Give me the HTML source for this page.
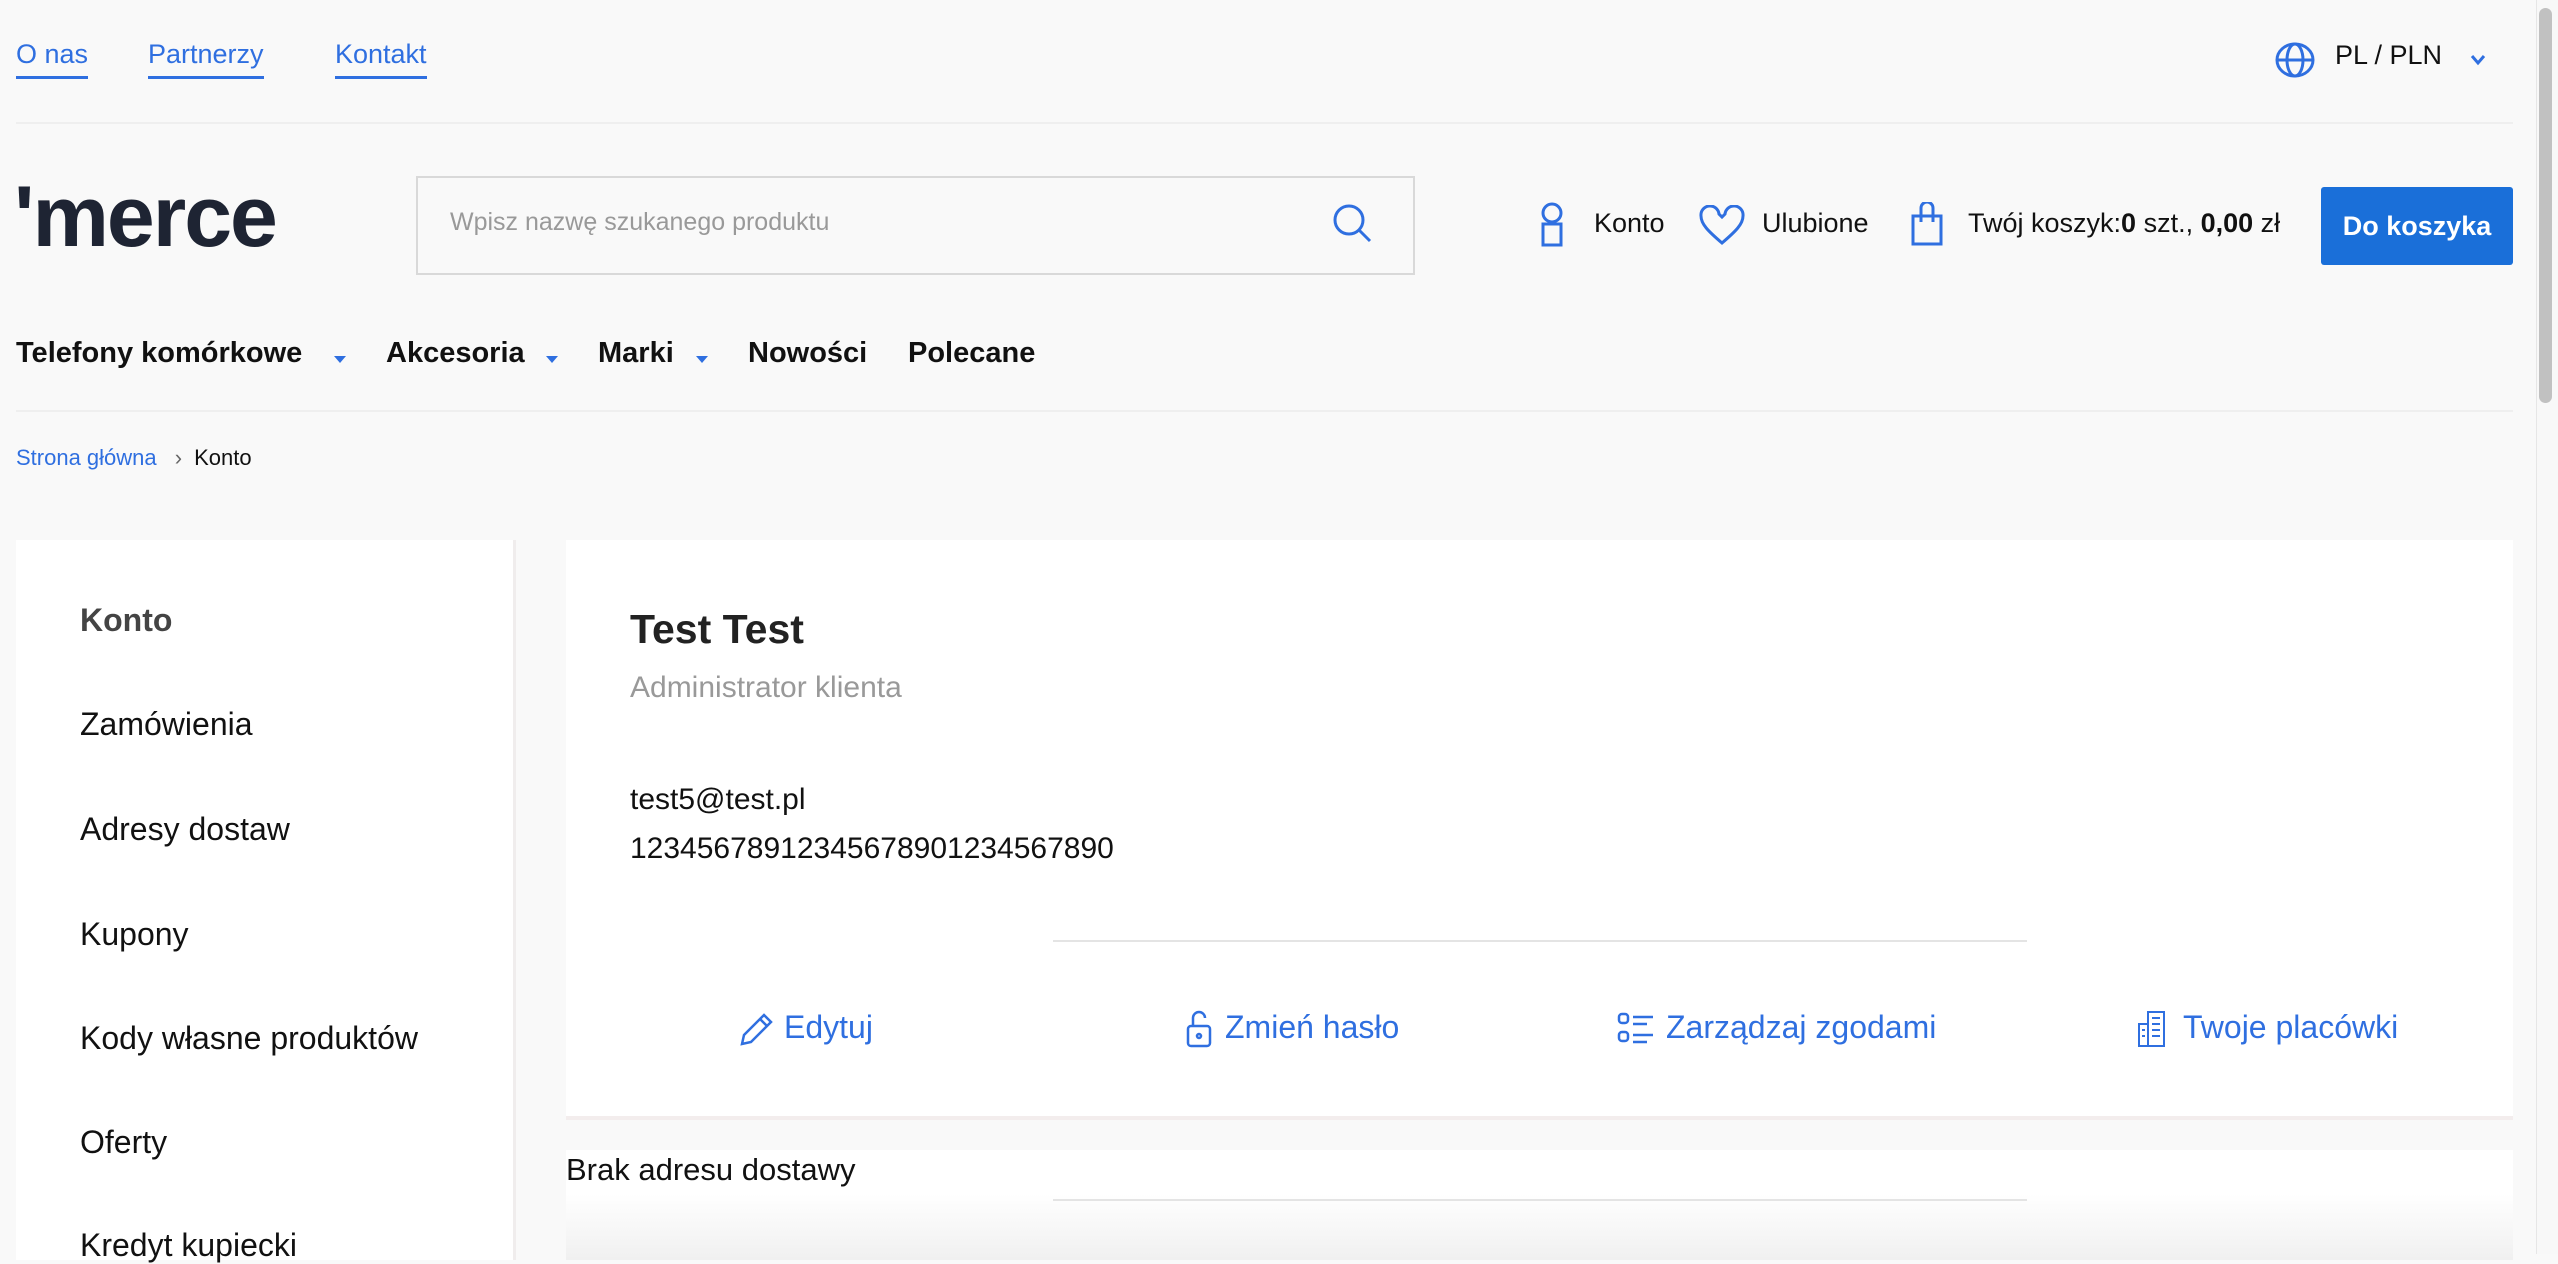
<!DOCTYPE html>
<html><head><meta charset="utf-8"><style>
*{margin:0;padding:0;box-sizing:border-box}
body{width:2558px;height:1254px;overflow:hidden;background:#f9f9f9;font-family:"Liberation Sans",sans-serif;color:#111;position:relative}
.a{position:absolute;white-space:nowrap}
.tl{color:#2f6fe0;font-size:27px;top:39px;border-bottom:3px solid #2f6fe0;padding-bottom:6px}
.nav{font-size:29px;font-weight:bold;top:337px}
.caret{position:absolute;width:0;height:0;border-left:6px solid transparent;border-right:6px solid transparent;border-top:7px solid #2f6fe0}
.side{font-size:32px;color:#111}
.act{font-size:32px;color:#2f6fe0;top:1009px}
svg{position:absolute}
</style></head><body>
<div class="a tl" style="left:16px">O nas</div>
<div class="a tl" style="left:148px">Partnerzy</div>
<div class="a tl" style="left:335px">Kontakt</div>
<svg style="left:2275px;top:42px" width="40" height="36" viewBox="0 0 40 36" fill="none" stroke="#2f6fe0" stroke-width="3"><ellipse cx="20" cy="18" rx="18" ry="16"/><ellipse cx="20" cy="18" rx="8" ry="16"/><line x1="2" y1="18" x2="38" y2="18"/></svg>
<div class="a" style="left:2335px;top:40px;font-size:27px">PL / PLN</div>
<svg style="left:2470px;top:54px" width="16" height="12" viewBox="0 0 16 12"><path d="M2 2l6 7 6-7" stroke="#2f6fe0" stroke-width="3" fill="none"/></svg>
<div class="a" style="left:16px;top:122px;width:2497px;height:2px;background:#efefef"></div>
<div class="a" style="left:14px;top:168px;font-size:86px;font-weight:bold;color:#1e2433;letter-spacing:-2px">'merce</div>
<div class="a" style="left:416px;top:176px;width:999px;height:99px;border:2px solid #d9d9d9;background:#f9f9f9"></div>
<div class="a" style="left:450px;top:208px;font-size:25px;color:#999">Wpisz nazwę szukanego produktu</div>
<svg style="left:1332px;top:203px" width="42" height="40" viewBox="0 0 42 40" fill="none" stroke="#2f6fe0" stroke-width="3"><circle cx="17" cy="17" r="14"/><line x1="27" y1="27" x2="38" y2="38"/></svg>
<svg style="left:1538px;top:202px" width="28" height="45" viewBox="0 0 28 45" fill="none" stroke="#2f6fe0" stroke-width="3"><circle cx="14" cy="11" r="9"/><rect x="5" y="22" width="18" height="21"/></svg>
<div class="a" style="left:1594px;top:208px;font-size:27px">Konto</div>
<svg style="left:1698px;top:205px" width="48" height="40" viewBox="0 0 48 40" fill="none" stroke="#2f6fe0" stroke-width="3"><path d="M24 38C10 26 3 19 3 11a9 9 0 0 1 18-2l3 3 3-3a9 9 0 0 1 18 2c0 8-7 15-21 27z"/></svg>
<div class="a" style="left:1762px;top:208px;font-size:27px">Ulubione</div>
<svg style="left:1910px;top:202px" width="34" height="44" viewBox="0 0 34 44" fill="none" stroke="#2f6fe0" stroke-width="3"><rect x="3" y="14" width="28" height="28"/><path d="M11 20V6a6 6 0 0 1 12 0v14"/></svg>
<div class="a" style="left:1968px;top:208px;font-size:27px">Twój koszyk:<b>0</b> szt., <b>0,00</b> zł</div>
<div class="a" style="left:2321px;top:187px;width:192px;height:78px;background:#1a6fd9;border-radius:3px;color:#fff;font-weight:bold;font-size:27px;text-align:center;line-height:78px">Do koszyka</div>
<div class="a nav" style="left:16px">Telefony komórkowe</div><div class="caret" style="left:334px;top:356px"></div>
<div class="a nav" style="left:386px">Akcesoria</div><div class="caret" style="left:546px;top:356px"></div>
<div class="a nav" style="left:598px">Marki</div><div class="caret" style="left:696px;top:356px"></div>
<div class="a nav" style="left:748px">Nowości</div>
<div class="a nav" style="left:908px">Polecane</div>
<div class="a" style="left:16px;top:410px;width:2497px;height:2px;background:#efefef"></div>
<div class="a" style="left:16px;top:445px;font-size:22px;color:#2f6fe0">Strona główna <span style="color:#666;margin:0 12px">›</span><span style="color:#111">Konto</span></div>
<div class="a" style="left:16px;top:540px;width:500px;height:720px;background:#fff;border-right:3px solid #f0eded"></div>
<div class="a side" style="left:80px;top:602px;color:#444;font-weight:bold">Konto</div>
<div class="a side" style="left:80px;top:706px">Zamówienia</div>
<div class="a side" style="left:80px;top:811px">Adresy dostaw</div>
<div class="a side" style="left:80px;top:916px">Kupony</div>
<div class="a side" style="left:80px;top:1020px">Kody własne produktów</div>
<div class="a side" style="left:80px;top:1124px">Oferty</div>
<div class="a side" style="left:80px;top:1227px">Kredyt kupiecki</div>
<div class="a" style="left:566px;top:540px;width:1947px;height:580px;background:#fff;border-bottom:4px solid #f3eded"></div>
<div class="a" style="left:630px;top:606px;font-size:41px;font-weight:bold;color:#222">Test Test</div>
<div class="a" style="left:630px;top:671px;font-size:30px;color:#999">Administrator klienta</div>
<div class="a" style="left:630px;top:783px;font-size:30px">test5@test.pl</div>
<div class="a" style="left:630px;top:832px;font-size:30px">12345678912345678901234567890</div>
<div class="a" style="left:1053px;top:940px;width:974px;height:2px;background:#e4e4e4"></div>
<svg style="left:738px;top:1010px" width="36" height="38" viewBox="0 0 36 38" fill="none" stroke="#2f6fe0" stroke-width="2.5"><path d="M4 34l2-9L26 5l7 7L13 32z M22 9l7 7"/></svg>
<div class="a act" style="left:784px">Edytuj</div>
<svg style="left:1185px;top:1008px" width="28" height="40" viewBox="0 0 28 40" fill="none" stroke="#2f6fe0" stroke-width="2.5"><rect x="3" y="18" width="22" height="20" rx="3"/><path d="M8 18V10a6 6 0 0 1 12 0"/><circle cx="14" cy="28" r="2"/></svg>
<div class="a act" style="left:1225px">Zmień hasło</div>
<svg style="left:1617px;top:1012px" width="40" height="34" viewBox="0 0 40 34" fill="none" stroke="#2f6fe0" stroke-width="2.5"><rect x="2" y="2" width="9" height="9" rx="3"/><rect x="2" y="20" width="9" height="9" rx="3"/><path d="M16 5h20M16 12h14M16 23h20M16 30h14"/></svg>
<div class="a act" style="left:1666px">Zarządzaj zgodami</div>
<svg style="left:2136px;top:1010px" width="32" height="38" viewBox="0 0 32 38" fill="none" stroke="#2f6fe0" stroke-width="2"><rect x="12" y="2" width="16" height="34"/><rect x="3" y="14" width="9" height="22"/><path d="M16 8h8M16 14h8M16 20h8M16 26h8M6 20h3M6 26h3"/></svg>
<div class="a act" style="left:2183px">Twoje placówki</div>
<div class="a" style="left:566px;top:1150px;width:1947px;height:110px;background:linear-gradient(#fff 40%,#f0f0f0)"></div>
<div class="a" style="left:566px;top:1152px;font-size:31px">Brak adresu dostawy</div>
<div class="a" style="left:1053px;top:1199px;width:974px;height:2px;background:#e4e4e4"></div>
<div class="a" style="left:2536px;top:0;width:22px;height:1254px;background:#f8f8f8;border-left:1px solid #e6e6e6"></div>
<div class="a" style="left:2539px;top:8px;width:13px;height:395px;background:#c1c1c1;border-radius:7px"></div>
</body></html>
